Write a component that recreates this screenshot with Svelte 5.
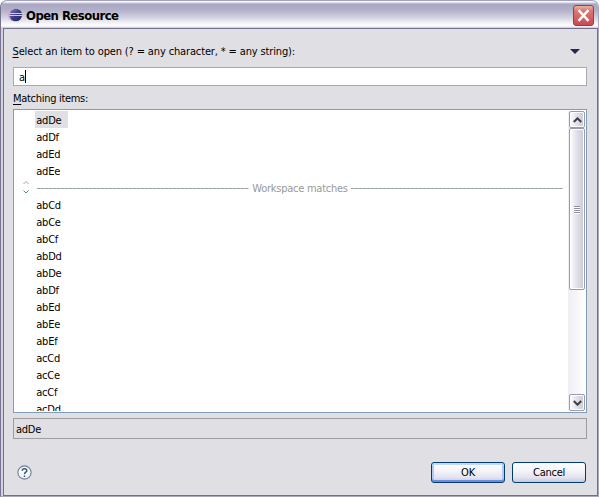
<script>
  const recent = ['adDe', 'adDf', 'adEd', 'adEe'];
  const workspace = ['abCd', 'abCe', 'abCf', 'abDd', 'abDe', 'abDf', 'abEd', 'abEe', 'abEf', 'acCd', 'acCe', 'acCf', 'acDd'];
</script>

<div class="window">
  <header>
    <svg class="logo" width="16" height="16" viewBox="0 0 16 16">
      <defs>
        <linearGradient id="orb" x1="0" x2="1" y1="0" y2="1">
          <stop offset="0" stop-color="#8c80bc" /><stop offset=".5" stop-color="#3f3c84" /><stop offset="1" stop-color="#252464" />
        </linearGradient>
      </defs>
      <circle cx="7" cy="8" r="6.300" fill="#d3a9cf" />
      <circle cx="8.800" cy="8" r="6.300" fill="url(#orb)" />
      <path d="M2 6.500h13M2 8.500h13" stroke="#c9d0ef" stroke-width="1" />
    </svg>
    <h1>Open Resource</h1>
    <button class="close" aria-label="Close">
      <svg width="21" height="21" viewBox="0 0 21 21">
        <path d="M5.500 5.200 15.500 15.800M15.500 5.200 5.500 15.800" stroke="#fff" stroke-width="2.500" />
      </svg>
    </button>
  </header>
  <main>
    <div class="prompt">
      <label for="q"><u>S</u>elect an item to open (? = any character, * = any string):</label>
      <svg width="10" height="5" viewBox="0 0 10 5"><path d="M0 0h10L5 5z" fill="#29264a" /></svg>
    </div>
    <div class="field" id="q">a<i></i></div>
    <div class="caption"><u>M</u>atching items:</div>
    <div class="list">
      <div class="rows">
        {#each recent as item, i}
          <div class="row"><span class:selected={i === 0}>{item}</span></div>
        {/each}
        <div class="separator">
          <svg width="6" height="15" viewBox="0 0 6 15" fill="none">
            <path d="M.5 4 3 1.500l2.500 2.500" stroke="#aaa17c" />
            <path d="M.5 10.500 3 13l2.500-2.500" stroke="#379393" />
          </svg>
          <b></b><span>Workspace matches</span><b></b>
        </div>
        {#each workspace as item}
          <div class="row"><span>{item}</span></div>
        {/each}
      </div>
      <div class="scroll">
        <div class="arrow"><svg width="9" height="6" viewBox="0 0 9 6"><path d="M.8 5 4.500 1.300 8.200 5" /></svg></div>
        <div class="thumb"><em></em></div>
        <div class="track"></div>
        <div class="arrow"><svg width="9" height="6" viewBox="0 0 9 6"><path d="M.8 1 4.500 4.700 8.200 1" /></svg></div>
      </div>
    </div>
    <div class="status">adDe</div>
    <footer>
      <svg class="help" width="15" height="15" viewBox="0 0 15 15" fill="none">
        <circle cx="7.500" cy="7.500" r="6.600" fill="#f8f9fb" stroke="#6c8099" stroke-width="1.100" />
        <path d="M5.200 5.800C5.200 3 9.800 3 9.800 5.700 9.800 7.300 7.500 7.200 7.500 9.200M7.500 10.400v1.700" stroke="#40566f" stroke-width="1.500" />
      </svg>
      <button class="btn ok">OK</button>
      <button class="btn">Cancel</button>
    </footer>
  </main>
</div>

<style>
  :global(body) { margin: 0; background: #fff; }
  * { box-sizing: border-box; }
  .window {
    width: 599px; height: 497px; padding: 1px 0 0 2px; overflow: hidden;
    display: flex; flex-direction: column;
    border-radius: 7px 7px 0 0; border: 1px solid #6f6b8d; border-color: #a3a1bd #aaa8c0 #aaa8c0 #77738f;
    background: #d2d1de;
    font: 11px/17px "DejaVu Sans Condensed", "DejaVu Sans", sans-serif;
    letter-spacing: -0.25px; color: #000;
  }
  header {
    height: 27px; margin: -1px 0 0 -2px; padding: 2px 4px 0 6px; flex: none;
    display: flex; align-items: center; border-radius: 6px 6px 0 0;
    background: linear-gradient(#fff 0, #f4f3f8 1px, #a9a7c2 3px, #b1b0c9 9px, #d0d0de 16px, #f8f8fb 23px, #fff 25px, #c9c8d4 27px);
  }
  .logo { margin-bottom: 1px; }
  h1 { margin: 1px 0 0 3px; flex: 1; font: bold 13px/20px "DejaVu Sans Condensed", sans-serif; letter-spacing: -0.55px; }
  .close {
    width: 21px; height: 21px; padding: 0; border: 1px solid #9b3b43; border-radius: 3px;
    background: linear-gradient(#e9b4a2, #dc7770 25%, #d65f60 65%, #c54a52); display: flex;
  }
  .close svg { margin: -1px; flex: none; }
  main { flex: 1; border: 1px solid #73708f; background: #e0dfe3; padding: 14px 10px 0 9px; }
  .prompt { height: 24px; display: flex; justify-content: space-between; padding: 0 7px 0 0; letter-spacing: -0.14px; }
  .prompt label { margin-left: -0.5px; }
  .prompt svg { margin-top: 6px; }
  u { text-decoration: underline; text-underline-offset: 2px; text-decoration-thickness: 1px; }
  .field { height: 19px; border: 1px solid #a5acb2; background: #fff; padding: 1px 5px; display: flex; }
  .field i { width: 1px; height: 13px; margin-top: 1px; background: #000; }
  .caption { height: 23px; padding-top: 4px; letter-spacing: -0.3px; }
  .list { height: 304px; border: 1px solid #7f9db9; background: #fff; display: flex; padding: 1px; }
  .rows { flex: 1; height: 300px; overflow: hidden; }
  .row { height: 17px; padding-left: 20px; line-height: 19px; }
  .row span { display: block; height: 17px; padding-left: 1.3px; }
  .row .selected { background: #e0dfe3; width: 33px; }
  .separator { height: 17px; display: flex; align-items: center; color: #999; padding: 0 5px 0 8px; }
  .separator svg { margin-right: 8px; }
  .separator b { flex: 1; height: 1px; margin-top: 1px; background: repeating-linear-gradient(90deg, #8ea3b0 0 3px, #c8c2bb 3px 4px); }
  .separator span { padding: 2px 3px 0; }
  .scroll { width: 17px; display: flex; flex-direction: column; background: linear-gradient(90deg, #eeeef5, #fff); }
  .arrow, .thumb { margin: 0 0 0 1px; border: 1px solid #9a9aae; border-radius: 2px; background: linear-gradient(90deg, #fff, #e5e5ed 40%, #c9c8d8); box-shadow: inset 0 0 0 1px #fff; display: flex; align-items: center; justify-content: center; }
  .arrow { height: 17px; flex: none; }
  .arrow path { fill: none; stroke: #3f3e45; stroke-width: 2; }
  .thumb { height: 162px; flex: none; }
  .thumb em { width: 6px; height: 8px; margin-top: 1px; background: repeating-linear-gradient(#8d8da3 0 1px, #fff 1px 2px); }
  .track { flex: 1; }
  .status { height: 21px; margin-top: 5px; border: 1px solid #9d9da1; padding: 2px 2px; }
  footer { display: flex; gap: 7px; padding: 23px 1px 0 4px; }
  .help { margin: 3px auto 0 0; }
  .btn { width: 74px; height: 21px; padding: 0; border: 1px solid #003c74; border-radius: 3px; background: linear-gradient(#fff, #f4f4f9 40%, #e5e4ef 75%, #c8c7dc); font: inherit; letter-spacing: -.25px; color: #000; }
  .ok { box-shadow: inset 0 2px #c3d9fb, inset 0 -2px #6d8fdd, inset 2px 0 #b2c9f3, inset -2px 0 #b2c9f3; }
</style>
